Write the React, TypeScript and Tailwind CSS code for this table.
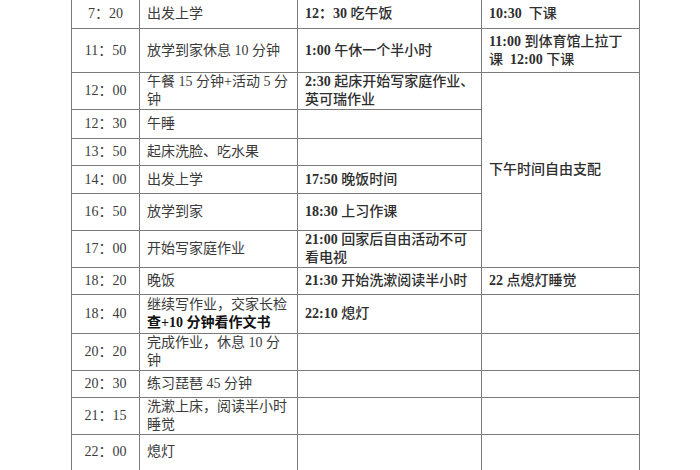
import React from "react";

const font = { fontFamily: '"Liberation Serif", "Noto Sans CJK SC", serif' };

type Row = {
  h: number;
  t: string;
  a: React.ReactNode;
  b?: React.ReactNode;
  c?: React.ReactNode;
  cSpan?: number;
  skipC?: boolean;
};

const N = ({ children }: { children: React.ReactNode }) => (
  <span className="font-bold">{children}</span>
);

const rows: Row[] = [
  {
    h: 29,
    t: "7：20",
    a: "出发上学",
    b: (
      <>
        <N>12：30</N> 吃午饭
      </>
    ),
    c: (
      <>
        <N>10:30</N> &nbsp;下课
      </>
    ),
  },
  {
    h: 44,
    t: "11：50",
    a: "放学到家休息 10 分钟",
    b: (
      <>
        <N>1:00</N> 午休一个半小时
      </>
    ),
    c: (
      <>
        <N>11:00</N> 到体育馆上拉丁
        <br />
        课 &nbsp;<N>12:00</N> 下课
      </>
    ),
  },
  {
    h: 37,
    t: "12：00",
    a: (
      <>
        午餐 15 分钟+活动 5 分
        <br />钟
      </>
    ),
    b: (
      <>
        <N>2:30</N> 起床开始写家庭作业、
        <br />
        英可瑞作业
      </>
    ),
    c: "下午时间自由支配",
    cSpan: 6,
  },
  { h: 29, t: "12：30", a: "午睡", b: "", skipC: true },
  { h: 27, t: "13：50", a: "起床洗脸、吃水果", b: "", skipC: true },
  {
    h: 28,
    t: "14：00",
    a: "出发上学",
    b: (
      <>
        <N>17:50</N> 晚饭时间
      </>
    ),
    skipC: true,
  },
  {
    h: 37,
    t: "16：50",
    a: "放学到家",
    b: (
      <>
        <N>18:30</N> 上习作课
      </>
    ),
    skipC: true,
  },
  {
    h: 36,
    t: "17：00",
    a: "开始写家庭作业",
    b: (
      <>
        <N>21:00</N> 回家后自由活动不可
        <br />
        看电视
      </>
    ),
    skipC: true,
  },
  {
    h: 27,
    t: "18：20",
    a: "晚饭",
    b: (
      <>
        <N>21:30</N> 开始洗漱阅读半小时
      </>
    ),
    c: (
      <>
        <N>22</N> 点熄灯睡觉
      </>
    ),
  },
  {
    h: 39,
    t: "18：40",
    a: (
      <>
        继续写作业，交家长检
        <br />
        <span className="font-bold text-[#111]">查+10 分钟看作文书</span>
      </>
    ),
    b: (
      <>
        <N>22:10</N> 熄灯
      </>
    ),
    c: "",
  },
  {
    h: 36,
    t: "20：20",
    a: (
      <>
        完成作业，休息 10 分
        <br />钟
      </>
    ),
    b: "",
    c: "",
  },
  { h: 27, t: "20：30", a: "练习琵琶 45 分钟", b: "", c: "" },
  {
    h: 37,
    t: "21：15",
    a: (
      <>
        洗漱上床，阅读半小时
        <br />
        睡觉
      </>
    ),
    b: "",
    c: "",
  },
  { h: 36, t: "22：00", a: "熄灯", b: "", c: "" },
];

export default function App() {
  return (
    <div className="w-[700px] h-[470px] bg-white overflow-hidden" style={font}>
      <table className="ml-[71px] -mt-[1px] table-fixed border-collapse text-[14px] leading-[18px] border-b-2 border-[#7a7a7a]">
        <colgroup>
          <col className="w-[68px]" />
          <col className="w-[158px]" />
          <col className="w-[184px]" />
          <col className="w-[158px]" />
        </colgroup>
        <tbody>
          {rows.map((r, i) => (
            <tr key={i} style={{ height: r.h }}>
              <td className="border border-[#7a7a7a] text-center align-middle text-[#3a3a3a] whitespace-nowrap p-0">
                {r.t}
              </td>
              <td className="border border-[#7a7a7a] align-middle text-[#3a3a3a] whitespace-nowrap pl-[7px] pr-0 py-0">
                {r.a}
              </td>
              <td className="border border-[#7a7a7a] align-middle text-[#2e2e2e] font-medium whitespace-nowrap pl-[7px] pr-0 py-0">
                {r.b}
              </td>
              {!r.skipC && (
                <td
                  rowSpan={r.cSpan ?? 1}
                  className="border border-[#7a7a7a] align-middle text-[#2e2e2e] font-medium whitespace-nowrap pl-[7px] pr-0 py-0"
                >
                  {r.c}
                </td>
              )}
            </tr>
          ))}
        </tbody>
      </table>
    </div>
  );
}
